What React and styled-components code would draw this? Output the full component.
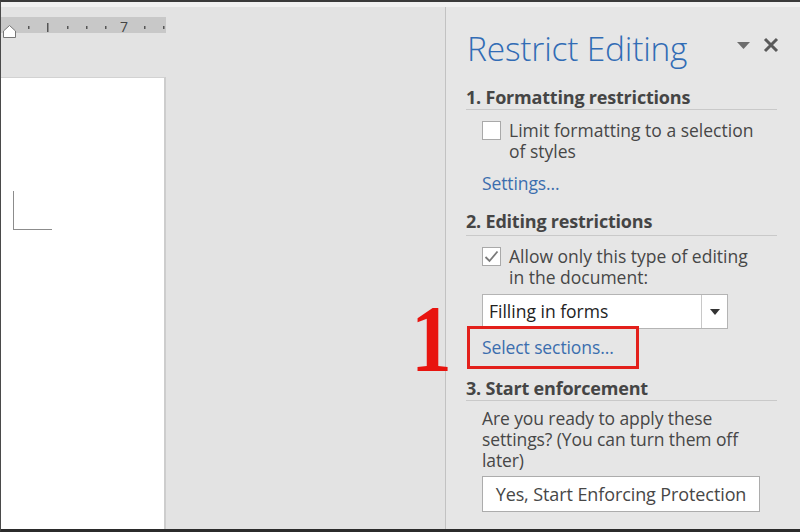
import React from 'react';
import styled, { createGlobalStyle } from 'styled-components';

const GlobalStyle = createGlobalStyle`
  html, body {
    margin: 0;
    padding: 0;
    background: #e4e4e4;
  }
  * {
    box-sizing: border-box;
  }
`;

const Window = styled.div`
  width: 800px;
  height: 532px;
  display: flex;
  flex-direction: column;
  overflow: hidden;
  border-top: 2px solid #3a3a3a;
  border-bottom: 3px solid #2b2b2b;
  border-left: 1px solid #4a4a4a;
  background: #e4e4e4;
  font-family: 'Open Sans', 'Noto Sans', sans-serif;
  color: #474747;
`;

const TopStrip = styled.div`
  height: 5px;
  background: #f1f1f1;
`;

const Main = styled.div`
  flex: 1;
  display: flex;
  min-height: 0;
`;

const DocArea = styled.div`
  width: 445px;
  display: flex;
  flex-direction: column;
  border-right: 1px solid #c2c2c2;
  background: #e3e3e3;
`;

const RulerWrap = styled.div`
  padding-top: 10px;
  height: 31px;
`;

const Page = styled.div`
  margin-top: 39px;
  width: 165px;
  flex: 1;
  background: #fff;
  border-top: 1px solid #d2d2d2;
  border-right: 2px solid #cdcdcd;
  padding-top: 113px;
  padding-left: 12px;
`;

const CropMark = styled.div`
  width: 39px;
  height: 39px;
  border-left: 1px solid #8c8c8c;
  border-bottom: 1px solid #8c8c8c;
`;

const Pane = styled.div`
  flex: 1;
  padding: 21px 23px 0 20px;
  background: #e6e6e6;
  display: flex;
  flex-direction: column;
`;

const PaneHeader = styled.div`
  display: flex;
  align-items: flex-start;
  justify-content: space-between;
`;

const Title = styled.h1`
  margin: 0;
  padding-left: 1px;
  font-weight: 300;
  font-size: 33.5px;
  line-height: 40px;
  color: #316cb5;
  letter-spacing: -0.2px;
  white-space: nowrap;
`;

const HeaderIcons = styled.div`
  display: flex;
  align-items: center;
  gap: 13px;
  padding-top: 9px;
  margin-right: -2px;
`;

const SectionTitle = styled.h2`
  margin: ${p => p.$top}px 0 0;
  padding-bottom: ${p => p.$pad}px;
  font-size: 18px;
  font-weight: 700;
  line-height: 22px;
  color: #454545;
  border-bottom: 1px solid #c9c9c9;
  letter-spacing: -0.2px;
`;

const Indent = styled.div`
  padding-left: 16px;
  padding-right: 10px;
  margin-top: ${p => p.$top || 0}px;
  position: relative;
`;

const CheckRow = styled.label`
  display: flex;
  align-items: flex-start;
  gap: 8px;
  font-size: 17.5px;
  line-height: 21px;
  color: #474747;
`;

const Box = styled.span`
  flex: none;
  width: 19px;
  height: 19px;
  margin-top: 1px;
  background: #fff;
  border: 1px solid #a9a9a9;
  display: flex;
  align-items: center;
  justify-content: center;
`;

const Link = styled.a`
  display: inline-block;
  font-size: 17.5px;
  line-height: 21px;
  color: #3b6eae;
  text-decoration: none;
  letter-spacing: -0.1px;
`;

const Select = styled.div`
  width: 246px;
  height: 35px;
  display: flex;
  background: #fff;
  border: 1px solid #b4b4b4;
`;

const SelectValue = styled.div`
  flex: 1;
  padding-left: 6px;
  font-size: 17.5px;
  line-height: 33px;
  color: #222;
`;

const SelectArrow = styled.div`
  width: 26px;
  border-left: 1px solid #c8c8c8;
  display: flex;
  align-items: center;
  justify-content: center;
`;

const Callout = styled.div`
  position: absolute;
  left: 1px;
  top: -11px;
  width: 172px;
  height: 43px;
  border: 3px solid #e3201b;
  pointer-events: none;
`;

const CalloutNumber = styled.div`
  position: absolute;
  left: -55px;
  top: -46px;
  font-family: 'Liberation Serif', 'Times New Roman', serif;
  font-weight: 700;
  font-size: 96px;
  line-height: 96px;
  color: #e8140f;
  transform: scaleX(0.85);
  transform-origin: left top;
`;

const Paragraph = styled.p`
  margin: 0;
  font-size: 17.5px;
  line-height: 21px;
  color: #474747;
  letter-spacing: -0.1px;
`;

const Button = styled.button`
  margin-top: 5px;
  width: 278px;
  height: 36px;
  padding: 0;
  background: #fff;
  border: 1px solid #acacac;
  font-family: inherit;
  font-size: 18px;
  color: #474747;
  letter-spacing: -0.1px;
  white-space: nowrap;
`;

const Ruler = () => (
  <svg width="165" height="21" viewBox="0 0 165 21">
    <rect x="0" y="0" width="165" height="16" fill="#c8c8c8" />
    {[27, 66, 85, 104, 143, 162].map(x => (
      <rect key={x} x={x} y="9" width="1.5" height="3" fill="#555" />
    ))}
    <rect x="46" y="6" width="1.5" height="9" fill="#555" />
    <text x="119" y="15" fontFamily="Open Sans, sans-serif" fontSize="14" fill="#444">7</text>
    <path d="M2.5 20.5 L2.5 14 L8.5 8.5 L14.5 14 L14.5 20.5 Z" fill="#fff" stroke="#777" strokeWidth="1" />
  </svg>
);

export default function App() {
  return (
    <>
      <GlobalStyle />
      <Window>
        <TopStrip />
        <Main>
          <DocArea>
            <RulerWrap>
              <Ruler />
            </RulerWrap>
            <Page>
              <CropMark />
            </Page>
          </DocArea>
          <Pane>
            <PaneHeader>
              <Title>Restrict Editing</Title>
              <HeaderIcons>
                <svg width="13" height="7" viewBox="0 0 13 7">
                  <path d="M0 0 H13 L6.5 7 Z" fill="#6d6d6d" />
                </svg>
                <svg width="16" height="16" viewBox="0 0 16 16">
                  <path d="M2 2 L14 14 M14 2 L2 14" stroke="#5a5a5a" strokeWidth="3" />
                </svg>
              </HeaderIcons>
            </PaneHeader>

            <SectionTitle $top={18} $pad={1}>1. Formatting restrictions</SectionTitle>
            <Indent $top={10}>
              <CheckRow>
                <Box />
                <span>Limit formatting to a selection of styles</span>
              </CheckRow>
            </Indent>
            <Indent $top={11}>
              <Link>Settings...</Link>
            </Indent>

            <SectionTitle $top={15} $pad={3}>2. Editing restrictions</SectionTitle>
            <Indent $top={10}>
              <CheckRow>
                <Box>
                  <svg width="15" height="13" viewBox="0 0 15 13">
                    <path d="M1.5 7 L5.5 11 L13.5 1.5" fill="none" stroke="#7a7a7a" strokeWidth="1.8" />
                  </svg>
                </Box>
                <span>Allow only this type of editing in the document:</span>
              </CheckRow>
            </Indent>
            <Indent $top={6}>
              <Select>
                <SelectValue>Filling in forms</SelectValue>
                <SelectArrow>
                  <svg width="10" height="6" viewBox="0 0 10 6">
                    <path d="M0 0 H10 L5 6 Z" fill="#333" />
                  </svg>
                </SelectArrow>
              </Select>
            </Indent>
            <Indent $top={8}>
              <Link>Select sections...</Link>
              <Callout />
              <CalloutNumber>1</CalloutNumber>
            </Indent>

            <SectionTitle $top={18} $pad={1}>3. Start enforcement</SectionTitle>
            <Indent $top={7}>
              <Paragraph>Are you ready to apply these settings? (You can turn them off later)</Paragraph>
              <Button>Yes, Start Enforcing Protection</Button>
            </Indent>
          </Pane>
        </Main>
      </Window>
    </>
  );
}
